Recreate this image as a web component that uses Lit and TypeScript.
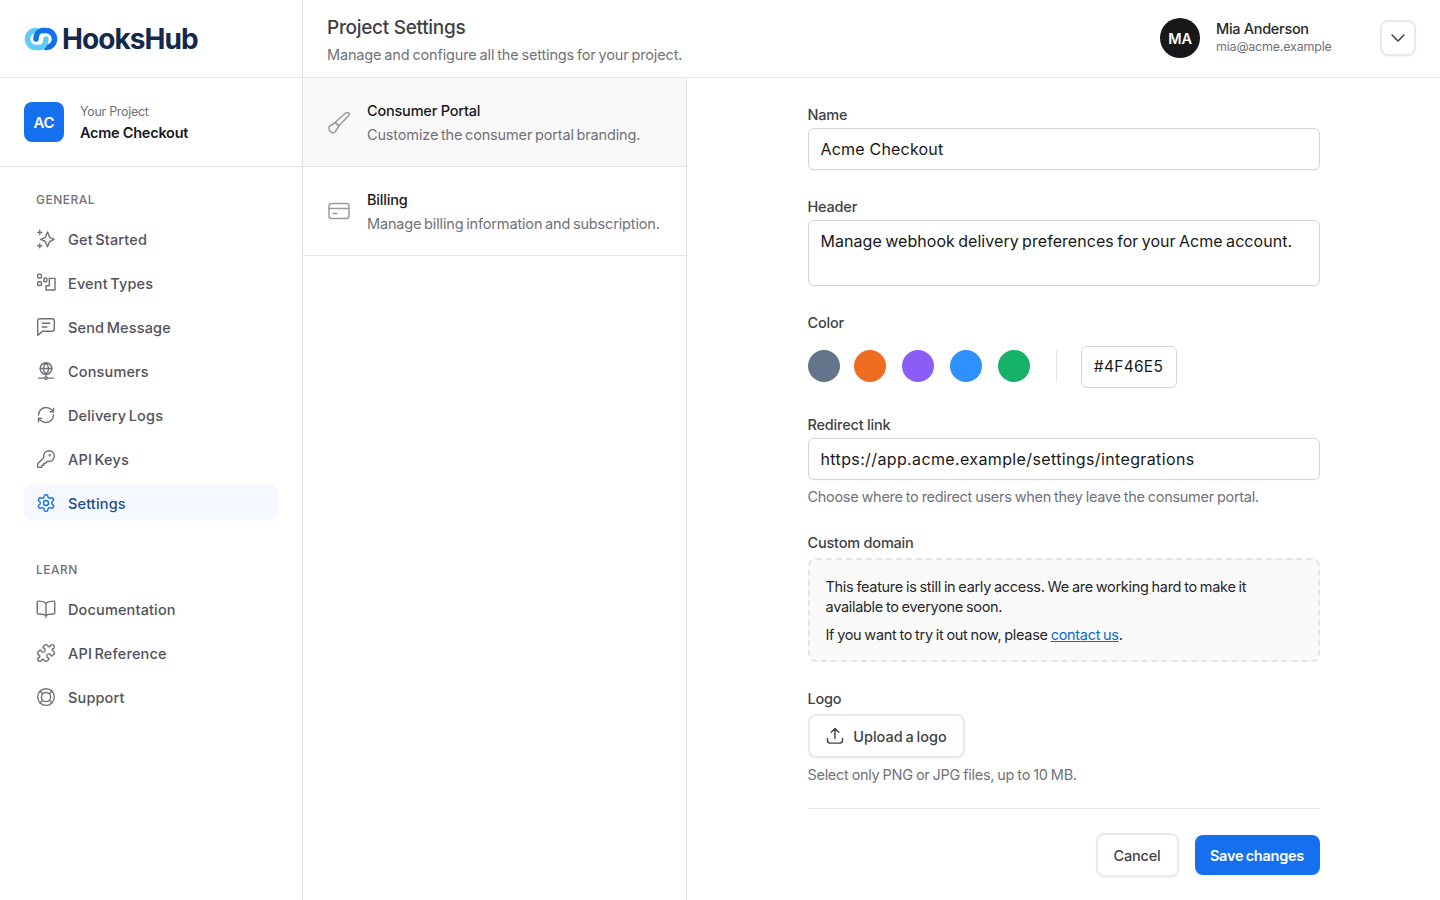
import { LitElement, html, css, svg } from 'lit';
import { customElement } from 'lit/decorators.js';

const icons: Record<string, unknown> = {
  sparkle: svg`<path d="M13.8 3.6l2.6 6.4 5.4 2.4-5.400 2.600-2.600 6.200-2.600-6.200-5.600-2.600 5.600-2.400z"/><path d="M4.500 1.500v5M2 4h5M4.500 17.500v5M2 20h5"/>`,
  types: svg`<rect x="2" y="1.500" width="4.500" height="4.500" rx="1"/><rect x="2" y="10.500" width="4.500" height="4.500" rx="1"/><rect x="9.500" y="6" width="3.500" height="4.500" rx="1"/><path d="M16 6.400h6.800v14H12v-5.200h4z"/>`,
  message: svg`<path d="M2 4.500A2.500 2.500 0 0 1 4.500 2h15A2.500 2.500 0 0 1 22 4.500v10a2.500 2.500 0 0 1-2.500 2.500H8l-6 5z"/><path d="M7.500 7.500h9M7.500 12h5.500"/>`,
  globe: svg`<circle cx="12" cy="9" r="7"/><path d="M5 9h14M12 2c-4 4.500-4 9.500 0 14M12 2c4 4.500 4 9.500 0 14M12 16v3"/><circle cx="12" cy="20.500" r="1.500"/><path d="M3 20.500h7.500M13.500 20.500H21"/>`,
  sync: svg`<path d="M3 12a9 9 0 0 1 9-9 9.750 9.750 0 0 1 6.740 2.740L21 8"/><path d="M21 4v4h-4"/><path d="M21 12a9 9 0 0 1-9 9 9.750 9.750 0 0 1-6.740-2.740L3 16"/><path d="M7 16H3v4"/>`,
  key: svg`<path d="M15.500 2a6.500 6.500 0 0 1 0 13c-.7 0-1.300-.1-1.900-.3l-2.100 2.300H9.500v2.500H7V22H2v-4.300l7.300-7.300A6.500 6.500 0 0 1 15.500 2z"/><circle cx="16.500" cy="7.500" r=".6"/>`,
  gear: svg`<path d="M12.220 2h-.44a2 2 0 0 0-2 2v.18a2 2 0 0 1-1 1.730l-.43.25a2 2 0 0 1-2 0l-.15-.08a2 2 0 0 0-2.730.73l-.22.38a2 2 0 0 0 .73 2.730l.15.1a2 2 0 0 1 1 1.720v.51a2 2 0 0 1-1 1.740l-.15.09a2 2 0 0 0-.73 2.730l.22.38a2 2 0 0 0 2.730.73l.15-.08a2 2 0 0 1 2 0l.43.25a2 2 0 0 1 1 1.730V20a2 2 0 0 0 2 2h.44a2 2 0 0 0 2-2v-.18a2 2 0 0 1 1-1.730l.43-.25a2 2 0 0 1 2 0l.15.08a2 2 0 0 0 2.730-.73l.22-.39a2 2 0 0 0-.73-2.730l-.15-.08a2 2 0 0 1-1-1.740v-.5a2 2 0 0 1 1-1.740l.15-.09a2 2 0 0 0 .73-2.730l-.22-.38a2 2 0 0 0-2.730-.73l-.15.08a2 2 0 0 1-2 0l-.43-.25a2 2 0 0 1-1-1.730V4a2 2 0 0 0-2-2z"/><circle cx="12" cy="12" r="3"/>`,
  book: svg`<path d="M12 5.500C10.500 3.500 8 2.500 3 2.500a1.500 1.500 0 0 0-1.500 1.500v12.500A1.500 1.500 0 0 0 3 18c5 0 7.500.5 9 2 1.500-1.500 4-2 9-2a1.500 1.500 0 0 0 1.500-1.500V4A1.500 1.500 0 0 0 21 2.500c-5 0-7.500 1-9 3zM12 5.500V22"/>`,
  puzzle: svg`<path d="M15.390 4.390a1 1 0 0 0 1.680-.474 2.500 2.500 0 1 1 3.014 3.015 1 1 0 0 0-.474 1.680l1.683 1.682a2.414 2.414 0 0 1 0 3.414L19.610 15.390a1 1 0 0 1-1.680-.474 2.500 2.500 0 1 0-3.014 3.015 1 1 0 0 1 .474 1.680l-1.683 1.682a2.414 2.414 0 0 1-3.414 0L8.610 19.610a1 1 0 0 0-1.680.474 2.500 2.500 0 1 1-3.014-3.015 1 1 0 0 0 .474-1.680l-1.683-1.682a2.414 2.414 0 0 1 0-3.414L4.390 8.610a1 1 0 0 1 1.680.474 2.500 2.500 0 1 0 3.014-3.015 1 1 0 0 1-.474-1.680l1.683-1.682a2.414 2.414 0 0 1 3.414 0z"/>`,
  buoy: svg`<circle cx="12" cy="12" r="10"/><circle cx="12" cy="12" r="5.500"/><path d="M5 5l3 3M19 5l-3 3M5 19l3-3M19 19l-3-3"/>`,
  brush: svg`<path d="M22 3c-1.200-.9-2.600-.6-4 .5L8 12.500l3.500 3.500L21 6.500c1.200-1.400 1.700-2.700 1-3.500z"/><path d="M8.500 12.500l-5 3a3.200 3.200 0 0 0-1.200 4.500l1 1.500a3.200 3.200 0 0 0 4.700.5L12 16z"/>`,
  card: svg`<rect x="2" y="4.500" width="20" height="15" rx="2.500"/><path d="M2 9.500h20M6 14.500h4"/>`,
  upload: svg`<path d="M12 15V3.500M7.500 7.500 12 3l4.500 4.500"/><path d="M3 15v2.500A3 3 0 0 0 6 20.500h12a3 3 0 0 0 3-3V15"/>`,
  chevron: svg`<path d="M6 9l6 6 6-6"/>`,
};

const icon = (name: string, size = 20, weight = 1.7) => html`<svg class="ic" width=${size} height=${size} viewBox="0 0 24 24" fill="none" stroke="currentColor" stroke-width=${weight} stroke-linecap="round" stroke-linejoin="round">${icons[name]}</svg>`;

const general = [
  ['sparkle', 'Get Started'],
  ['types', 'Event Types'],
  ['message', 'Send Message'],
  ['globe', 'Consumers'],
  ['sync', 'Delivery Logs'],
  ['key', 'API Keys'],
  ['gear', 'Settings'],
];
const learn = [
  ['book', 'Documentation'],
  ['puzzle', 'API Reference'],
  ['buoy', 'Support'],
];
const swatches = ['#64748b', '#ee6c1f', '#8b5cf6', '#2e90fa', '#17b26a'];

@customElement('app-root')
export class AppRoot extends LitElement {
  static styles = css`
    :host {
      display: block;
      height: 900px;
      overflow: hidden;
      background: #fff;
      color: #18181b;
      font-family: 'Inter', 'Liberation Sans', sans-serif;
      font-size: 14px;
      letter-spacing: -0.2px;
    }
    .page {
      display: flex;
      height: 900px;
    }
    .ic {
      flex: none;
      display: block;
    }

    .sidebar {
      width: 303px;
      flex: none;
      box-sizing: border-box;
      border-right: 1px solid #e4e4e7;
    }
    .brand {
      height: 78px;
      box-sizing: border-box;
      border-bottom: 1px solid #e4e4e7;
      display: flex;
      align-items: center;
      padding-left: 24px;
      gap: 4px;
    }
    .brand-name {
      font-size: 28px;
      font-weight: 700;
      letter-spacing: -0.95px;
      color: #12284c;
    }
    .project {
      height: 89px;
      box-sizing: border-box;
      border-bottom: 1px solid #e4e4e7;
      display: flex;
      align-items: center;
      gap: 16px;
      padding-left: 24px;
    }
    .project-badge {
      width: 40px;
      height: 40px;
      border-radius: 8px;
      background: #1570ef;
      color: #fff;
      display: flex;
      align-items: center;
      justify-content: center;
      font-size: 15px;
      font-weight: 600;
    }
    .project-text {
      padding-top: 2px;
    }
    .project-small {
      font-size: 12.5px;
      color: #71717a;
      line-height: 18px;
      margin-bottom: 2px;
      letter-spacing: -0.3px;
    }
    .project-name {
      font-size: 14.5px;
      font-weight: 600;
      line-height: 20px;
      letter-spacing: -0.25px;
    }
    nav {
      padding: 24px 24px 0;
    }
    .nav-head {
      font-size: 12px;
      font-weight: 500;
      color: #71717a;
      letter-spacing: 0.5px;
      line-height: 18px;
      padding-left: 12px;
      margin-bottom: 12px;
    }
    .nav-group {
      display: flex;
      flex-direction: column;
      gap: 8px;
      margin-bottom: 40px;
    }
    .nav-item {
      height: 36px;
      width: 254px;
      box-sizing: border-box;
      border-radius: 8px;
      display: flex;
      align-items: center;
      gap: 12px;
      padding-left: 12px;
      font-size: 14.5px;
      font-weight: 500;
      color: #52525b;
      letter-spacing: 0.15px;
      word-spacing: -1.5px;
    }
    .nav-item .ic {
      color: #71717a;
    }
    .nav-item.active {
      background: #f5f9ff;
      color: #1d4e89;
    }
    .nav-item.active .ic {
      color: #1570ef;
    }

    .content {
      flex: 1;
      min-width: 0;
      display: flex;
      flex-direction: column;
    }
    .topbar {
      height: 78px;
      flex: none;
      box-sizing: border-box;
      border-bottom: 1px solid #e4e4e7;
      display: flex;
      align-items: center;
      padding: 0 24px 1px;
    }
    .title-block {
      flex: 1;
      padding-top: 4px;
    }
    h1 {
      margin: 0 0 3px;
      font-size: 19px;
      font-weight: 500;
      line-height: 26px;
      color: #3f3f46;
      letter-spacing: -0.3px;
    }
    .subtitle {
      font-size: 14.5px;
      line-height: 22px;
      color: #71717a;
      letter-spacing: -0.15px;
      word-spacing: -1px;
    }
    .user {
      display: flex;
      align-items: center;
    }
    .avatar {
      width: 40px;
      height: 40px;
      border-radius: 50%;
      background: #18181b;
      color: #fff;
      display: flex;
      align-items: center;
      justify-content: center;
      font-size: 14.5px;
      font-weight: 600;
      margin-right: 16px;
    }
    .user-info {
      width: 164px;
      margin-bottom: 3px;
    }
    .user-name {
      font-size: 14.5px;
      font-weight: 500;
      line-height: 20px;
      color: #27272a;
      letter-spacing: -0.3px;
    }
    .user-mail {
      font-size: 12.5px;
      line-height: 16px;
      color: #71717a;
    }
    .menu-btn {
      width: 36px;
      height: 36px;
      box-sizing: border-box;
      border: 2px solid #e9e9ec;
      border-radius: 8px;
      background: #fff;
      display: flex;
      align-items: center;
      justify-content: center;
      color: #3f3f46;
      box-shadow: 0 1px 2px rgba(0, 0, 0, 0.05);
    }

    .columns {
      flex: 1;
      display: flex;
      min-height: 0;
    }
    .sections {
      width: 384px;
      flex: none;
      box-sizing: border-box;
      border-right: 1px solid #e4e4e7;
    }
    .section {
      height: 89px;
      box-sizing: border-box;
      border-bottom: 1px solid #e4e4e7;
      display: flex;
      align-items: center;
      gap: 16px;
      padding-left: 24px;
    }
    .section.active {
      background: #f9f9fa;
    }
    .section .ic {
      color: #9a9aa3;
    }
    .section-text {
      padding-top: 2px;
    }
    .section-title {
      font-size: 14.5px;
      font-weight: 500;
      line-height: 20px;
      margin-bottom: 4px;
    }
    .section-desc {
      font-size: 14.5px;
      line-height: 20px;
      color: #71717a;
      letter-spacing: -0.15px;
      word-spacing: -1.2px;
    }

    .main {
      flex: 1;
      min-width: 0;
    }
    form {
      width: 512px;
      margin: 0 auto;
      padding-top: 26px;
    }
    label, .label {
      display: block;
      font-size: 14.5px;
      font-weight: 500;
      line-height: 22px;
      color: #3f3f46;
      margin-bottom: 2px;
      letter-spacing: -0.2px;
    }
    .input {
      box-sizing: border-box;
      width: 100%;
      height: 42px;
      border: 1px solid #d4d4d8;
      border-radius: 6px;
      padding: 0 12px;
      font-size: 16px;
      line-height: 40px;
      color: #18181b;
      box-shadow: 0 1px 1px rgba(0, 0, 0, 0.03);
      letter-spacing: 0.2px;
    }
    .input.url {
      letter-spacing: 0.37px;
    }
    .input.tall {
      height: 66px;
      line-height: 24px;
      padding-top: 8px;
      letter-spacing: 0.05px;
      word-spacing: -1.2px;
    }
    .field {
      margin-bottom: 26px;
    }
    .field.short {
      margin-bottom: 25px;
    }
    .help {
      font-size: 14.5px;
      line-height: 20px;
      color: #71717a;
      margin-top: 7px;
      letter-spacing: -0.3px;
      word-spacing: -0.6px;
    }
    .colors {
      display: flex;
      align-items: center;
      margin-top: 12px;
      height: 42px;
    }
    .swatch {
      width: 32px;
      height: 32px;
      border-radius: 50%;
      margin: 0 16px 2px 0;
    }
    .swatch:first-child {
      margin-right: 14px;
    }
    .colors .sep {
      width: 1px;
      height: 32px;
      background: #e4e4e7;
      margin: 0 24px 2px 10px;
    }
    .hex {
      box-sizing: border-box;
      width: 96px;
      height: 42px;
      border: 1px solid #d4d4d8;
      border-radius: 6px;
      display: flex;
      align-items: center;
      justify-content: center;
      padding-bottom: 2px;
      font-size: 15.5px;
      letter-spacing: 0.3px;
    }
    .notice {
      box-sizing: border-box;
      height: 104px;
      border: 2px dashed #e4e4e7;
      border-radius: 8px;
      background: #fafafa;
      padding: 17px 16px 0;
      font-size: 14.5px;
      line-height: 20px;
      color: #27272a;
      margin-top: 4px;
      letter-spacing: -0.3px;
      word-spacing: -0.8px;
    }
    .notice p {
      margin: 0;
    }
    .notice p + p {
      margin-top: 8px;
    }
    .notice a {
      color: #0b6bcb;
      text-decoration: underline;
    }
    .upload {
      box-sizing: border-box;
      width: 157px;
      height: 44px;
      border: 2px solid #e9e9ec;
      border-radius: 8px;
      display: flex;
      align-items: center;
      justify-content: center;
      gap: 8px;
      font-size: 14.5px;
      font-weight: 500;
      color: #3f3f46;
      margin-top: 4px;
      box-shadow: 0 1px 2px rgba(0, 0, 0, 0.05);
      letter-spacing: 0;
      word-spacing: -1px;
    }
    .actions {
      border-top: 1px solid #e4e4e7;
      margin-top: 23px;
      padding-top: 24px;
      display: flex;
      justify-content: flex-end;
      align-items: center;
      gap: 16px;
    }
    .btn {
      box-sizing: border-box;
      display: flex;
      align-items: center;
      justify-content: center;
      border-radius: 8px;
      font-size: 14.5px;
      font-weight: 500;
    }
    .btn.ghost {
      width: 83px;
      height: 44px;
      border: 2px solid #e9e9ec;
      color: #3f3f46;
      box-shadow: 0 1px 2px rgba(0, 0, 0, 0.05);
    }
    .btn.primary {
      width: 125px;
      height: 40px;
      background: #1570ef;
      color: #fff;
      font-weight: 600;
      letter-spacing: -0.25px;
      word-spacing: -1px;
    }
  `;

  private navItem(item: string[]) {
    const active = item[1] === 'Settings';
    return html`<div class="nav-item ${active ? 'active' : ''}">${icon(item[0])}<span>${item[1]}</span></div>`;
  }

  render() {
    return html`
      <div class="page">
        <aside class="sidebar">
          <div class="brand">
            <svg width="34" height="24" viewBox="0 0 34 24" fill="none">
              <path d="M12 3.5a8.500 8.500 0 1 0 0 17h3" stroke="#5ccdf7" stroke-width="5.500" stroke-linecap="round"/>
              <path d="M22 20.500a8.500 8.500 0 0 0 0-17h-3" stroke="#1570ef" stroke-width="5.500" stroke-linecap="round"/>
              <path d="M19 3.500c-4 0-7 3.500-7 8.500" stroke="#1570ef" stroke-width="5.500" stroke-linecap="round"/>
              <path d="M15 20.500c4 0 7-3.500 7-8.500" stroke="#5ccdf7" stroke-width="5.500" stroke-linecap="round"/>
            </svg>
            <span class="brand-name">HooksHub</span>
          </div>
          <div class="project">
            <div class="project-badge">AC</div>
            <div class="project-text">
              <div class="project-small">Your Project</div>
              <div class="project-name">Acme Checkout</div>
            </div>
          </div>
          <nav>
            <div class="nav-head">GENERAL</div>
            <div class="nav-group">${general.map((i) => this.navItem(i))}</div>
            <div class="nav-head">LEARN</div>
            <div class="nav-group">${learn.map((i) => this.navItem(i))}</div>
          </nav>
        </aside>
        <div class="content">
          <header class="topbar">
            <div class="title-block">
              <h1>Project Settings</h1>
              <div class="subtitle">Manage and configure all the settings for your project.</div>
            </div>
            <div class="user">
              <div class="avatar">MA</div>
              <div class="user-info">
                <div class="user-name">Mia Anderson</div>
                <div class="user-mail">mia@acme.example</div>
              </div>
              <div class="menu-btn">${icon('chevron', 24, 1.5)}</div>
            </div>
          </header>
          <div class="columns">
            <div class="sections">
              <div class="section active">
                ${icon('brush', 24, 1.5)}
                <div class="section-text">
                  <div class="section-title">Consumer Portal</div>
                  <div class="section-desc">Customize the consumer portal branding.</div>
                </div>
              </div>
              <div class="section">
                ${icon('card', 24, 1.5)}
                <div class="section-text">
                  <div class="section-title">Billing</div>
                  <div class="section-desc">Manage billing information and subscription.</div>
                </div>
              </div>
            </div>
            <div class="main">
              <form>
                <div class="field">
                  <label>Name</label>
                  <div class="input">Acme Checkout</div>
                </div>
                <div class="field">
                  <label>Header</label>
                  <div class="input tall">Manage webhook delivery preferences for your Acme account.</div>
                </div>
                <div class="field">
                  <div class="label">Color</div>
                  <div class="colors">
                    ${swatches.map((c) => html`<div class="swatch" style="background:${c}"></div>`)}
                    <div class="sep"></div>
                    <div class="hex">#4F46E5</div>
                  </div>
                </div>
                <div class="field short">
                  <label>Redirect link</label>
                  <div class="input url">https://app.acme.example/settings/integrations</div>
                  <div class="help">Choose where to redirect users when they leave the consumer portal.</div>
                </div>
                <div class="field">
                  <div class="label">Custom domain</div>
                  <div class="notice">
                    <p>This feature is still in early access. We are working hard to make it available to everyone soon.</p>
                    <p>If you want to try it out now, please <a href="#">contact us</a>.</p>
                  </div>
                </div>
                <div>
                  <div class="label">Logo</div>
                  <div class="upload">${icon('upload')}<span>Upload a logo</span></div>
                  <div class="help">Select only PNG or JPG files, up to 10 MB.</div>
                </div>
                <div class="actions">
                  <div class="btn ghost">Cancel</div>
                  <div class="btn primary">Save changes</div>
                </div>
              </form>
            </div>
          </div>
        </div>
      </div>
    `;
  }
}
